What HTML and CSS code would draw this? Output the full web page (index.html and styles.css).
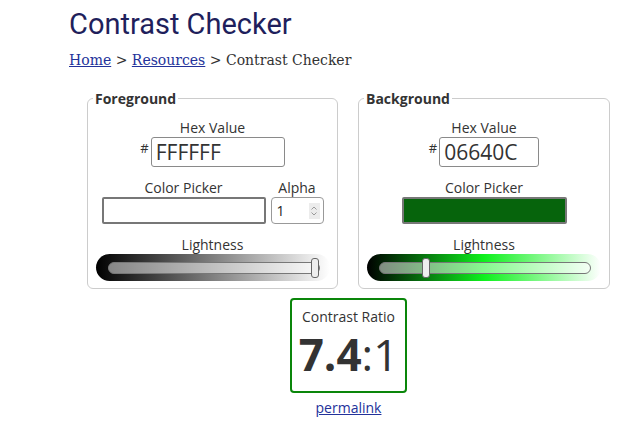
FILE: index.html
```html
<!DOCTYPE html>
<html lang="en">
<head>
<meta charset="utf-8">
<title>Contrast Checker</title>
<link rel="stylesheet" href="styles.css">
</head>
<body>
<main class="page">
  <h1 class="title">Contrast Checker</h1>
  <nav class="crumbs"><a href="#">Home</a> &gt; <a href="#">Resources</a> &gt; Contrast Checker</nav>

  <div class="tool">
    <div class="panels">
      <fieldset class="panel panel-fg">
        <legend class="legend">Foreground</legend>
        <div class="label">Hex Value</div>
        <div class="hexrow"><span class="hash">#</span><input class="hex hex-fg" type="text" value="FFFFFF"></div>
        <div class="pickrow">
          <div class="pickgroup">
            <div class="label">Color Picker</div>
            <input class="picker picker-fg" type="color" value="#ffffff">
          </div>
          <div class="pickgroup">
            <div class="label">Alpha</div>
            <div class="alpha"><span class="alpha-val">1</span><span class="spin"><svg width="8" height="12" viewBox="0 0 8 12"><path d="M1.5 4.5 4 2 6.5 4.5M1.5 7.5 4 10 6.5 7.5" fill="none" stroke="#9a9a9a" stroke-width="1"/></svg></span></div>
          </div>
        </div>
        <div class="label">Lightness</div>
        <input class="slider slider-fg" type="range" min="0" max="100" value="100">
      </fieldset>

      <fieldset class="panel panel-bg">
        <legend class="legend">Background</legend>
        <div class="label">Hex Value</div>
        <div class="hexrow"><span class="hash">#</span><input class="hex hex-bg" type="text" value="06640C"></div>
        <div class="pickrow">
          <div class="pickgroup">
            <div class="label">Color Picker</div>
            <input class="picker picker-bg" type="color" value="#06640c">
          </div>
        </div>
        <div class="label">Lightness</div>
        <input class="slider slider-bg" type="range" min="0" max="100" value="21">
      </fieldset>
    </div>

    <div class="result">
      <div class="ratio">
        <div class="ratio-label">Contrast Ratio</div>
        <div class="ratio-value"><b>7.4</b>:1</div>
      </div>
      <a class="permalink" href="#">permalink</a>
    </div>
  </div>
</main>
</body>
</html>
```

FILE: styles.css
```css
* { box-sizing: border-box; }
html, body { margin: 0; padding: 0; background: #fff; }
body { font-family: "Open Sans", sans-serif; color: #333; }

.page { padding: 5px 0 0 69px; }

.title {
  margin: 0;
  font-family: Roboto, sans-serif;
  font-weight: 400;
  font-size: 29px;
  line-height: 38px;
  color: #1f1f5c;
}

.crumbs {
  margin-top: 7px;
  font-family: "DejaVu Serif", serif;
  font-size: 14px;
  line-height: 20px;
  color: #333;
}
.crumbs a { color: #23329a; }

.tool { margin: 19px 0 0 18px; width: 523px; }

.panels { display: flex; gap: 20px; align-items: flex-start; }

.panel {
  margin: 0;
  border: 1px solid #ccc;
  border-radius: 6px;
  padding: 11px 7px 7px 7px;
  display: flex;
  flex-direction: column;
  align-items: center;
}
.panel-fg { width: 251px; }
.panel-bg { width: 252px; }
.legend {
  padding: 0 2px;
  margin-left: -2px;
  font-weight: 700;
  font-size: 14px;
  line-height: 19px;
  color: #333;
}

.label { font-size: 14px; line-height: 18px; text-align: center; color: #333; }

.hexrow { display: flex; align-items: flex-start; gap: 2px; margin-bottom: 12px; }
.hash { font-size: 13px; line-height: 14px; margin-top: 4px; }
.hex {
  height: 30px;
  border: 1px solid #8a8a8a;
  border-radius: 3px;
  padding: 0 4px;
  font-family: "Open Sans", sans-serif;
  font-size: 21px;
  color: #333;
  background: #fff;
}
.hex-fg { width: 134px; }
.hex-bg { width: 100px; }

.pickrow { display: flex; gap: 5px; align-items: flex-end; margin-bottom: 12px; }
.pickgroup { display: flex; flex-direction: column; align-items: center; }

.picker {
  -webkit-appearance: none;
  appearance: none;
  width: 164px;
  height: 27px;
  border: 2px solid #777;
  border-radius: 2px;
  padding: 0;
  margin: 0;
  background: none;
}
.picker-bg { width: 165px; }
.picker::-webkit-color-swatch-wrapper { padding: 0; }
.picker::-webkit-color-swatch { border: none; border-radius: 0; }

.alpha {
  width: 53px;
  height: 27px;
  border: 1px solid #999;
  border-radius: 4px;
  display: flex;
  align-items: center;
  justify-content: space-between;
  padding: 0 3px 0 5px;
  font-size: 14px;
  color: #222;
}
.spin {
  width: 11px; height: 16px;
  background: #ececec;
  display: flex; align-items: center; justify-content: center;
}

.slider {
  -webkit-appearance: none;
  appearance: none;
  display: block;
  width: 234px;
  height: 27px;
  margin: 0;
  padding: 0 10px 0 12px;
  border-radius: 14px;
}
.slider-fg { background: linear-gradient(to right, #000, #fff); }
.slider-bg { background: linear-gradient(to right, #000, hsl(124, 89%, 50%), #fff); }
.slider::-webkit-slider-runnable-track {
  height: 12px;
  border: 1px solid #777;
  border-radius: 6px;
  background: rgba(255, 255, 255, 0.5);
}
.slider::-webkit-slider-thumb {
  -webkit-appearance: none;
  appearance: none;
  width: 8px;
  height: 20px;
  margin-top: -5px;
  border: 1px solid #666;
  border-radius: 3px;
  background: #eee;
}

.result { display: flex; flex-direction: column; align-items: center; margin-top: 9px; }
.ratio {
  width: 117px;
  height: 95px;
  border: 2px solid #0a860a;
  border-radius: 4px;
  text-align: center;
  padding-top: 7px;
}
.ratio-label { font-size: 14px; line-height: 20px; }
.ratio-value { font-size: 44px; line-height: 54px; color: #333; }
.ratio-value b { font-weight: 700; }
.permalink { margin-top: 5px; font-size: 14px; line-height: 20px; color: #23329a; }
```
